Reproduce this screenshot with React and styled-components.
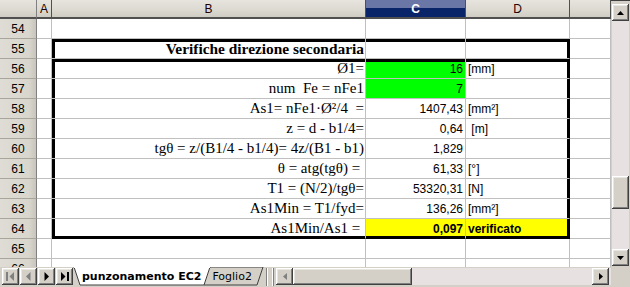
import React from 'react';
import styled, { createGlobalStyle } from 'styled-components';

const rows = [
  { n: 54 },
  { n: 55, title: 'Verifiche direzione secondaria' },
  { n: 56, label: 'Ø1=', value: '16', unit: '[mm]', fill: '#00ff00' },
  { n: 57, label: 'num  Fe = nFe1', value: '7', fill: '#00ff00' },
  { n: 58, label: 'As1= nFe1·Ø²/4  =', value: '1407,43', unit: '[mm²]' },
  { n: 59, label: 'z = d - b1/4=', value: '0,64', unit: ' [m]' },
  { n: 60, label: 'tgθ = z/(B1/4 - b1/4)= 4z/(B1 - b1)', value: '1,829' },
  { n: 61, label: 'θ = atg(tgθ) = ', value: '61,33', unit: '[°]' },
  { n: 62, label: 'T1 = (N/2)/tgθ=', value: '53320,31', unit: '[N]' },
  { n: 63, label: 'As1Min = T1/fyd=', value: '136,26', unit: '[mm²]' },
  { n: 64, label: 'As1Min/As1 = ', value: '0,097', unit: 'verificato', fill: '#ffff00', unitFill: '#ffff00', bold: true },
  { n: 65 },
  { n: 66 },
];

// thick box edges for cells B..D of rows 55-64
const edgesFor = (n, col) => {
  if (n < 55 || n > 64) return '';
  let e = '';
  if (n === 55 || n === 56) e += 't';
  if (n === 64) e += 'b';
  if (col === 'B') e += 'l';
  if (col === 'D') e += 'r';
  return e;
};

const App = () => {
  return (
    <>
      <GlobalStyle />
      <Window>
        <Main>
          <Sheet>
            <Corner />
            <ColHead>A</ColHead>
            <ColHead>B</ColHead>
            <ColHead $selected>C</ColHead>
            <ColHead>D</ColHead>
            <ColHead />
            {rows.map((r) => (
              <React.Fragment key={r.n}>
                <RowHead>{r.n}</RowHead>
                <Cell />
                <Cell $serif $align="right" $bold={!!r.title} $title={!!r.title} $edges={edgesFor(r.n, 'B')}>
                  {r.title || r.label}
                </Cell>
                <Cell $align="right" $bg={r.fill} $bold={r.bold} $pad="0 2px 0 0" $edges={edgesFor(r.n, 'C')}>
                  {r.value}
                </Cell>
                <Cell $bg={r.unitFill} $bold={r.bold} $pad="0 0 0 2px" $edges={edgesFor(r.n, 'D')}>
                  {r.unit}
                </Cell>
                <Cell />
              </React.Fragment>
            ))}
          </Sheet>
          <VScroll>
            <ScrollButton>
              <svg width="7" height="4" viewBox="0 0 7 4"><polygon points="0,4 3.5,0 7,4" fill="#000" /></svg>
            </ScrollButton>
            <Track />
            <Thumb />
            <Track />
            <ScrollButton>
              <svg width="7" height="4" viewBox="0 0 7 4"><polygon points="0,0 3.5,4 7,0" fill="#000" /></svg>
            </ScrollButton>
          </VScroll>
        </Main>
        <BottomBar>
          <NavGroup>
            <NavButton>
              <svg width="9" height="9" viewBox="0 0 9 9">
                <rect x="0" y="0" width="2" height="9" fill="#808080" />
                <polygon points="8,0 3.5,4.5 8,9" fill="#808080" />
              </svg>
            </NavButton>
            <NavButton>
              <svg width="9" height="9" viewBox="0 0 9 9">
                <polygon points="6.5,0 2,4.5 6.5,9" fill="#808080" />
              </svg>
            </NavButton>
            <NavButton>
              <svg width="9" height="9" viewBox="0 0 9 9">
                <polygon points="2.5,0 7,4.5 2.5,9" fill="#000" />
              </svg>
            </NavButton>
            <NavButton>
              <svg width="9" height="9" viewBox="0 0 9 9">
                <polygon points="1,0 5.5,4.5 1,9" fill="#000" />
                <rect x="7" y="0" width="2" height="9" fill="#000" />
              </svg>
            </NavButton>
          </NavGroup>
          <TabStrip>
            <TabShapes width="192" height="19" viewBox="0 0 192 19">
              <polygon points="124,0 190,0 184,18 131,18" fill="#d4d0c8" stroke="#404040" strokeWidth="1" />
              <polygon points="1,0 137,0 131,18 7,18" fill="#ffffff" stroke="#404040" strokeWidth="1" />
              <line x1="1" y1="0" x2="137" y2="0" stroke="#ffffff" strokeWidth="2" />
            </TabShapes>
            <TabLabel $active $left={9}>punzonamento EC2</TabLabel>
            <TabLabel $left={11}>Foglio2</TabLabel>
          </TabStrip>
          <Splitter />
          <HScroll>
            <ScrollButton>
              <svg width="4" height="7" viewBox="0 0 4 7"><polygon points="4,0 0,3.5 4,7" fill="#808080" /></svg>
            </ScrollButton>
            <HThumb />
            <Track />
            <ScrollButton>
              <svg width="4" height="7" viewBox="0 0 4 7"><polygon points="0,0 4,3.5 0,7" fill="#000" /></svg>
            </ScrollButton>
          </HScroll>
          <BarCorner />
        </BottomBar>
      </Window>
    </>
  );
};

export default App;

// Styled Components
const GlobalStyle = createGlobalStyle`
  html, body {
    margin: 0;
    padding: 0;
    background: #d4d0c8;
  }
  body {
    width: 630px;
    height: 287px;
    overflow: hidden;
    font-family: "Liberation Sans", Arial, sans-serif;
  }
`;

const raised = `
  background: #d4d0c8;
  box-shadow: inset -1px -1px #404040, inset 1px 1px #ffffff, inset -2px -2px #808080, inset 2px 2px #e8e6e0;
`;

const Window = styled.div`
  display: flex;
  flex-direction: column;
  width: 630px;
  height: 287px;
`;

const Main = styled.div`
  display: flex;
  height: 267px;
`;

const Sheet = styled.div`
  display: grid;
  grid-template-columns: 37px 15px 314px 100px 104px 41px;
  grid-template-rows: 19px;
  grid-auto-rows: 20px;
  align-content: start;
  width: 611px;
  height: 267px;
  overflow: hidden;
  background: #fff;
`;

const headBg = 'linear-gradient(#e6e4de, #dcd9d1 60%, #cfccc3)';

const Corner = styled.div`
  box-sizing: border-box;
  background: ${headBg};
  border-right: 1px solid #808080;
  border-bottom: 2px solid #505050;
`;

const ColHead = styled.div`
  box-sizing: border-box;
  display: flex;
  align-items: center;
  justify-content: center;
  background: ${(p) => (p.$selected ? 'linear-gradient(#6a77a6 0, #6a77a6 45%, #0a246a 45%, #0a246a 100%)' : headBg)};
  color: ${(p) => (p.$selected ? '#fff' : '#200000')};
  font-weight: ${(p) => (p.$selected ? 700 : 400)};
  font-size: 12px;
  border-right: 1px solid #505050;
  border-bottom: 2px solid #505050;
  padding-top: 1px;
`;

const RowHead = styled.div`
  box-sizing: border-box;
  display: flex;
  align-items: center;
  justify-content: center;
  background: linear-gradient(90deg, #dedcd4, #d9d6ce 80%, #c8c5bc);
  border-right: 1px solid #808080;
  border-bottom: 1px solid #a8a59c;
  font-size: 12px;
  color: #000;
`;

const edgeShadow = (e = '') => {
  const s = [];
  if (e.includes('t')) s.push('inset 0 3px 0 #000');
  if (e.includes('b')) s.push('inset 0 -2px 0 #000');
  if (e.includes('l')) s.push('inset 3px 0 0 #000');
  if (e.includes('r')) s.push('inset -2px 0 0 #000');
  return s.length ? s.join(', ') : 'none';
};

const Cell = styled.div`
  box-sizing: border-box;
  display: flex;
  align-items: center;
  justify-content: ${(p) => (p.$align === 'right' ? 'flex-end' : 'flex-start')};
  padding: ${(p) => p.$pad || '0 1px 0 0'};
  background: ${(p) => p.$bg || '#fff'};
  border-right: 1px solid ${(p) => (p.$edges && p.$edges.includes('r') ? '#000' : '#c0c0c0')};
  border-bottom: 1px solid ${(p) => (p.$edges && p.$edges.includes('b') ? '#000' : '#c0c0c0')};
  box-shadow: ${(p) => edgeShadow(p.$edges)};
  font-family: ${(p) => (p.$serif ? '"Liberation Serif", "Times New Roman", serif' : '"Liberation Sans", Arial, sans-serif')};
  font-size: ${(p) => (p.$title ? '15.4px' : p.$serif ? '15px' : '12px')};
  font-weight: ${(p) => (p.$bold ? 700 : 400)};
  color: #000;
  white-space: pre;
  overflow: hidden;
`;

const VScroll = styled.div`
  display: grid;
  grid-template-rows: 17px 155px 33px 1fr 17px;
  width: 19px;
  box-sizing: border-box;
  padding: 3px 1px 1px 1px;
  background: #d4d0c8;
  border-top: 1px solid #404040;
`;

const ScrollButton = styled.div`
  ${raised}
  display: flex;
  align-items: center;
  justify-content: center;
  width: 17px;
  height: 17px;
`;

const Track = styled.div`
  background: #e8e1e1;
  flex: 1;
`;

const Thumb = styled.div`
  ${raised}
`;

const BottomBar = styled.div`
  display: flex;
  align-items: stretch;
  height: 20px;
  background: #d4d0c8;
`;

const NavGroup = styled.div`
  display: flex;
  gap: 1px;
  padding: 1px 0 2px 2px;
  width: 71px;
`;

const NavButton = styled.div`
  ${raised}
  display: flex;
  align-items: center;
  justify-content: center;
  width: 17px;
  height: 17px;
`;

const TabStrip = styled.div`
  position: relative;
  display: flex;
  width: 192px;
  height: 20px;
`;

const TabShapes = styled.svg`
  position: absolute;
  left: 0;
  top: 0;
`;

const TabLabel = styled.span`
  position: relative;
  margin-left: ${(p) => p.$left}px;
  font-family: "DejaVu Sans", Tahoma, sans-serif;
  font-size: 11px;
  font-weight: ${(p) => (p.$active ? 700 : 400)};
  line-height: 19px;
  color: #000;
`;

const Splitter = styled.div`
  width: 6px;
  margin: 1px 2px 1px 2px;
  border-left: 1px solid #808080;
  border-right: 1px solid #808080;
  box-shadow: inset 1px 0 #fff, inset -1px 0 #fff;
`;

const HScroll = styled.div`
  display: grid;
  grid-template-columns: 17px 119px 1fr 17px;
  width: 336px;
  height: 17px;
  margin-top: 1px;
  padding-right: 2px;
  box-sizing: border-box;
  background: #e8e1e1;
`;

const HThumb = styled.div`
  ${raised}
`;

const BarCorner = styled.div`
  width: 19px;
  background: #d4d0c8;
`;
